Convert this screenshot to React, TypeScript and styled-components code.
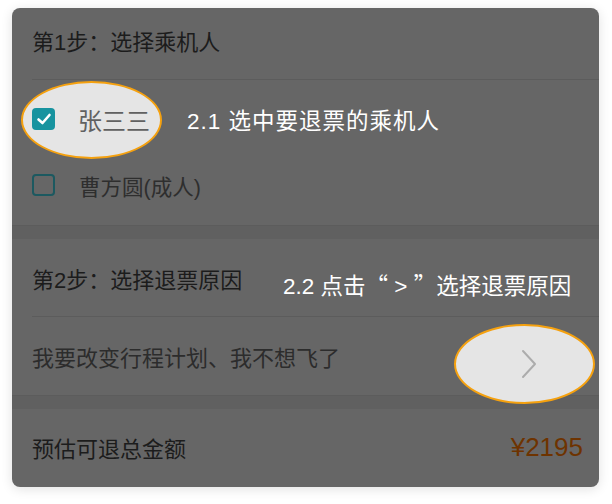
import React from "react";
import styled, { createGlobalStyle } from "styled-components";

const Global = createGlobalStyle`
  html, body { margin: 0; padding: 0; background: #ffffff; }
  body { font-family: "Liberation Sans", "Noto Sans CJK SC", sans-serif; }
`;

const Page = styled.div`
  width: 612px;
  height: 504px;
  box-sizing: border-box;
  padding: 8px 13px 0 12px;
  background: #ffffff;
`;

const Card = styled.div`
  position: relative;
  background: #666666;
  border-radius: 8px;
  box-shadow: 0 2px 12px rgba(0, 0, 0, 0.12);
  overflow: hidden;
  display: flex;
  flex-direction: column;
`;

const Section = styled.div`
  display: flex;
  flex-direction: column;
`;

const Gap = styled.div`
  height: 14px;
  background: #606060;
  border-top: 1px solid #5c5c5c;
  box-sizing: border-box;
`;

const Header = styled.div<{ $h: number; $pb: number }>`
  position: relative;
  height: ${(p) => p.$h}px;
  padding-bottom: ${(p) => p.$pb}px;
  display: flex;
  align-items: center;
  margin-left: 20px;
  border-bottom: 1px solid #5c5c5c;
  box-sizing: border-box;
  font-size: 22px;
  color: #1c1c1c;
`;

const List = styled.div`
  display: flex;
  flex-direction: column;
  padding: 6px 0 7px;
`;

const PassengerRow = styled.div`
  position: relative;
  height: 66px;
  display: flex;
  align-items: center;
  padding-left: 20px;
`;

const Highlight = styled.div<{ $l: number; $t: number; $w: number; $h: number }>`
  position: absolute;
  left: ${(p) => p.$l}px;
  top: ${(p) => p.$t}px;
  width: ${(p) => p.$w}px;
  height: ${(p) => p.$h}px;
  border-radius: 50%;
  background: #e5e5e5;
  border: 2px solid #f5a10f;
  box-sizing: border-box;
`;

const Check = styled.div<{ $on?: boolean }>`
  position: relative;
  width: 23px;
  height: 22px;
  box-sizing: border-box;
  border-radius: 4px;
  background: ${(p) => (p.$on ? "#17939f" : "transparent")};
  border: ${(p) => (p.$on ? "none" : "2px solid #1c5960")};
  display: flex;
  align-items: center;
  justify-content: center;
`;

const Name = styled.span<{ $on?: boolean }>`
  position: relative;
  margin-left: ${(p) => (p.$on ? 23 : 24)}px;
  font-size: ${(p) => (p.$on ? 24 : 21.5)}px;
  color: ${(p) => (p.$on ? "#616161" : "#2e2e2e")};
`;

const Note = styled.span<{ $l: number; $t?: number; $ls?: number }>`
  position: absolute;
  left: ${(p) => p.$l}px;
  ${(p) => (p.$t !== undefined ? `top: ${p.$t}px;` : "")}
  font-size: 22.5px;
  letter-spacing: ${(p) => p.$ls ?? 0}px;
  color: #ffffff;
  white-space: nowrap;
`;

const Quote = styled.span`
  font-family: "Noto Sans CJK SC", sans-serif;
`;

const ReasonRow = styled.div`
  position: relative;
  height: 78px;
  display: flex;
  align-items: center;
  justify-content: space-between;
  padding: 0 62px 0 20px;
  font-size: 22px;
  color: #2c2c2c;
`;

const Chevron = styled.svg`
  position: relative;
  width: 16px;
  height: 30px;
  margin-top: 16px;
`;

const PriceRow = styled.div`
  height: 78px;
  display: flex;
  align-items: center;
  justify-content: space-between;
  padding: 0 16px 2px 20px;
  box-sizing: border-box;
  font-size: 22px;
  color: #1c1c1c;
`;

const Price = styled.span`
  font-size: 26px;
  color: #6e3300;
`;

export default function App() {
  return (
    <>
      <Global />
      <Page>
        <Card>
          <Section>
            <Header $h={72} $pb={8}>第1步：选择乘机人</Header>
            <List>
              <PassengerRow>
                <Highlight $l={9} $t={-5} $w={141} $h={78} />
                <Check $on>
                  <svg width="16" height="14" viewBox="0 0 16 14">
                    <path d="M2.5 7.5 L6.5 11 L13.5 3" fill="none" stroke="#ffffff" strokeWidth="2.6" strokeLinecap="round" strokeLinejoin="round" />
                  </svg>
                </Check>
                <Name $on>张三三</Name>
                <Note $l={175} $ls={1}>2.1 选中要退票的乘机人</Note>
              </PassengerRow>
              <PassengerRow>
                <Check />
                <Name>曹方圆(成人)</Name>
              </PassengerRow>
            </List>
          </Section>
          <Gap />
          <Section>
            <Header $h={78} $pb={0}>
              第2步：选择退票原因
              <Note $l={251} $t={29}>
                2.2 点击<Quote>“</Quote> &gt; <Quote>”</Quote>选择退票原因
              </Note>
            </Header>
            <ReasonRow>
              我要改变行程计划、我不想飞了
              <Highlight $l={442} $t={7} $w={141} $h={80} />
              <Chevron viewBox="0 0 16 30">
                <path d="M2 2 L14 15 L2 28" fill="none" stroke="#acacac" strokeWidth="2" strokeLinecap="round" strokeLinejoin="round" />
              </Chevron>
            </ReasonRow>
          </Section>
          <Gap />
          <PriceRow>
            预估可退总金额
            <Price>¥2195</Price>
          </PriceRow>
        </Card>
      </Page>
    </>
  );
}
